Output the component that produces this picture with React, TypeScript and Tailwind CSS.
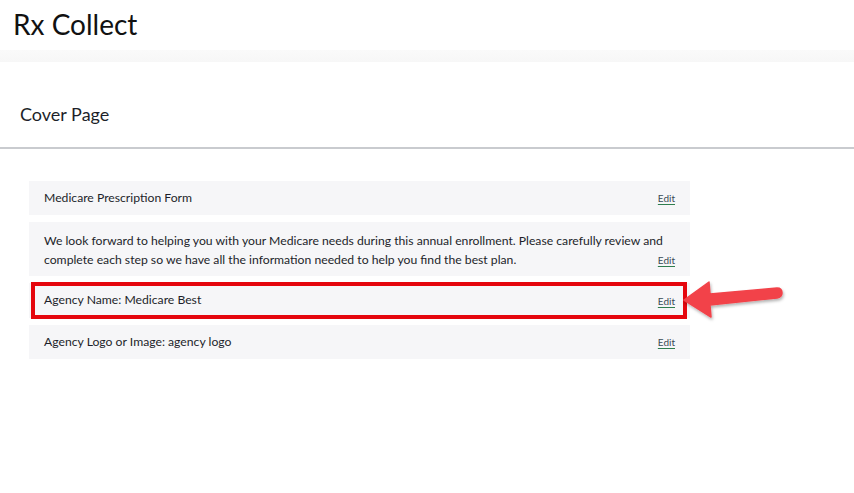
import React from 'react';

interface Item {
  id: string;
  lines: string[];
  highlight?: boolean;
}

const items: Item[] = [
  { id: 'title', lines: ['Medicare Prescription Form'] },
  {
    id: 'intro',
    lines: [
      'We look forward to helping you with your Medicare needs during this annual enrollment. Please carefully review and',
      'complete each step so we have all the information needed to help you find the best plan.'
    ]
  },
  { id: 'agency', lines: ['Agency Name: Medicare Best'], highlight: true },
  { id: 'logo', lines: ['Agency Logo or Image: agency logo'] }
];

const EditLink: React.FC = () => (
  <a
    href="#"
    className="text-[10px] leading-none text-[#3a4a55] underline decoration-[#2f7d4f] underline-offset-2 shrink-0"
  >
    Edit
  </a>
);

const App: React.FC = () => {
  return (
    <div className="min-h-screen bg-white text-[#1d1f2a] font-['Lato','Liberation_Sans',sans-serif] relative">
      {/* Header */}
      <div className="h-[50px] px-[13px] pb-[3px] flex items-center">
        <h1 className="text-[28px] leading-none text-[#111]">Rx Collect</h1>
      </div>
      <div className="h-[12px] bg-gradient-to-b from-[#fafafa] to-[#f7f7f7]" />

      {/* Page title */}
      <div className="h-[87px] px-[20px] pt-[41px] border-b-2 border-[#c9cbcf]">
        <h2 className="text-[18px] leading-[22px]">Cover Page</h2>
      </div>

      {/* Rows */}
      <div className="pt-[32px] pl-[29px] w-[690px] flex flex-col gap-[7px] text-[12.2px]">
        {items.map((item) =>
          item.lines.length > 1 ? (
            <div key={item.id} className="bg-[#f6f6f8] px-[15px] pt-[9px] pb-[7px]">
              <p className="leading-[19px]">{item.lines[0]}</p>
              <div className="flex items-center justify-between">
                <p className="leading-[19px]">{item.lines[1]}</p>
                <EditLink />
              </div>
            </div>
          ) : (
            <div
              key={item.id}
              className={`relative bg-[#f6f6f8] flex items-center justify-between px-[15px] ${
                item.highlight ? 'h-[35px]' : 'h-[34px]'
              }`}
            >
              <span>{item.lines[0]}</span>
              <EditLink />
              {item.highlight && (
                <div className="absolute left-[2px] right-[3px] -top-[1px] bottom-[-1px] border-4 border-[#e5060d] pointer-events-none" />
              )}
            </div>
          )
        )}
      </div>

      {/* Callout arrow */}
      <svg
        className="absolute left-[678px] top-[278px]"
        width="110"
        height="48"
        viewBox="0 0 110 48"
      >
        <defs>
          <filter id="sh" x="-20%" y="-40%" width="140%" height="180%">
            <feDropShadow dx="1" dy="2" stdDeviation="1.5" floodColor="#000" floodOpacity="0.3" />
          </filter>
        </defs>
        <g filter="url(#sh)">
          <path
            d="M6 22 L31 4 L32 16 L99 10 Q104 10 104 15 Q104 19 99 20 L32 27 L33 39 Z"
            fill="#f2434a"
            stroke="#f2434a"
            strokeWidth="1.5"
            strokeLinejoin="round"
          />
        </g>
      </svg>
    </div>
  );
};

export default App;
